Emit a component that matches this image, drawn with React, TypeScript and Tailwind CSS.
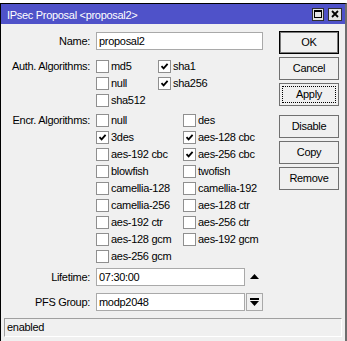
import * as React from "react"

const authRows: [string, boolean][] = [
  ["md5", false],
  ["sha1", true],
  ["null", false],
  ["sha256", true],
  ["sha512", false],
]

const encrRows: [string, boolean][] = [
  ["null", false],
  ["des", false],
  ["3des", true],
  ["aes-128 cbc", true],
  ["aes-192 cbc", false],
  ["aes-256 cbc", true],
  ["blowfish", false],
  ["twofish", false],
  ["camellia-128", false],
  ["camellia-192", false],
  ["camellia-256", false],
  ["aes-128 ctr", false],
  ["aes-192 ctr", false],
  ["aes-256 ctr", false],
  ["aes-128 gcm", false],
  ["aes-192 gcm", false],
  ["aes-256 gcm", false],
]

function Check({ label, checked }: { label: string; checked: boolean }) {
  return (
    <div className="flex h-[17px] items-center gap-[2px]">
      <span className="flex h-[13px] w-[13px] items-center justify-center border border-[#8f8f8f] bg-white">
        {checked && (
          <svg width="9" height="9" viewBox="0 0 9 9">
            <path d="M1.5 4.2 L3.6 6.4 L7.6 1.8" stroke="#000" strokeWidth="1.8" fill="none" />
          </svg>
        )}
      </span>
      <span>{label}</span>
    </div>
  )
}

function Label({ children }: { children: React.ReactNode }) {
  return <div className="flex h-[17px] w-[89px] shrink-0 items-center justify-end">{children}</div>
}

function Button({ children, variant }: { children: React.ReactNode; variant?: "default" | "focus" }) {
  if (variant === "default") {
    return (
      <div className="flex h-[23px] items-center justify-center border border-black bg-[#f0f0f0] shadow-[inset_0_0_0_1px_#7a7a7a]">
        {children}
      </div>
    )
  }
  return (
    <div className="flex h-[23px] items-center justify-center border border-[#707070] bg-[#f0f0f0] p-[2px]">
      {variant === "focus" ? (
        <span className="flex h-full w-full items-center justify-center border border-dotted border-black">{children}</span>
      ) : (
        children
      )}
    </div>
  )
}

export default function App() {
  return (
    <div className="h-[341px] w-[347px] overflow-hidden bg-white font-['Liberation_Sans',Arial,sans-serif] text-[11px] tracking-[-0.3px] text-black">
      <div className="h-[3px]" />
      <div className="flex h-[338px] flex-col border-t border-l border-r-2 border-black border-r-[#6e6e6e] bg-[#f0f0f0]">
        {/* title bar */}
        <div className="flex h-[20px] items-center justify-between bg-[#4f52c9] pl-[6px] pr-[3px] text-white">
          <span className="pt-[3px]">IPsec Proposal &lt;proposal2&gt;</span>
          <div className="flex gap-[4px]">
            <span className="flex h-[13px] w-[12px] items-center justify-center border border-[#303030] bg-[#e4e4e4]">
              <svg width="8" height="8" viewBox="0 0 8 8">
                <rect x="0.5" y="0.5" width="7" height="7" fill="none" stroke="#000" />
                <rect x="0" y="0" width="8" height="2" fill="#000" />
              </svg>
            </span>
            <span className="flex h-[13px] w-[14px] items-center justify-center border border-[#303030] bg-[#e4e4e4]">
              <svg width="8" height="8" viewBox="0 0 8 8">
                <path d="M1 1 L7 7 M7 1 L1 7" stroke="#000" strokeWidth="1.8" />
              </svg>
            </span>
          </div>
        </div>

        <div className="flex flex-1">
          {/* form */}
          <div className="w-[278px] pt-[8px]">
            <div className="flex h-[18px] items-center">
              <Label>Name:</Label>
              <div className="ml-[6px] flex h-[18px] w-[167px] items-center border border-[#a9a9a9] bg-white pl-[2px]">
                proposal2
              </div>
            </div>

            <div className="mt-[8px] flex">
              <Label>Auth. Algorithms:</Label>
              <div className="ml-[6px] grid grid-cols-[62px_1fr]">
                {authRows.map(([l, c]) => (
                  <Check key={l} label={l} checked={c} />
                ))}
              </div>
            </div>

            <div className="mt-[3px] flex">
              <Label>Encr. Algorithms:</Label>
              <div className="ml-[6px] grid grid-cols-[87px_1fr]">
                {encrRows.map(([l, c]) => (
                  <Check key={l} label={l} checked={c} />
                ))}
              </div>
            </div>

            <div className="mt-[3px] flex items-center">
              <Label>Lifetime:</Label>
              <div className="ml-[6px] flex h-[18px] w-[149px] items-center border border-[#a9a9a9] bg-white pl-[2px]">
                07:30:00
              </div>
              <svg className="ml-[5px]" width="9" height="6" viewBox="0 0 9 6">
                <path d="M4.5 0 L9 5 L0 5 Z" fill="#000" />
              </svg>
            </div>

            <div className="mt-[7px] flex items-center">
              <Label>PFS Group:</Label>
              <div className="ml-[6px] flex h-[18px] w-[149px] items-center border border-[#a9a9a9] bg-white pl-[2px]">
                modp2048
              </div>
              <div className="ml-[1px] flex h-[18px] w-[17px] items-center justify-center border border-[#a9a9a9] bg-[#f0f0f0]">
                <svg width="9" height="8" viewBox="0 0 9 8">
                  <rect x="0" y="0" width="9" height="2" fill="#000" />
                  <path d="M0 3 L9 3 L4.5 8 Z" fill="#000" />
                </svg>
              </div>
            </div>
          </div>

          {/* buttons */}
          <div className="flex w-[60px] flex-col pt-[7px]">
            <Button variant="default">OK</Button>
            <div className="mt-[3px]">
              <Button>Cancel</Button>
            </div>
            <div className="mt-[3px]">
              <Button variant="focus">Apply</Button>
            </div>
            <div className="mt-[9px]">
              <Button>Disable</Button>
            </div>
            <div className="mt-[3px]">
              <Button>Copy</Button>
            </div>
            <div className="mt-[3px]">
              <Button>Remove</Button>
            </div>
          </div>
        </div>

        {/* status bar */}
        <div className="mx-[3px] mb-[4px] flex h-[19px] items-center border border-t-[#a0a0a0] border-l-[#a0a0a0] border-r-white border-b-white pl-[2px]">
          enabled
        </div>
      </div>
    </div>
  )
}
